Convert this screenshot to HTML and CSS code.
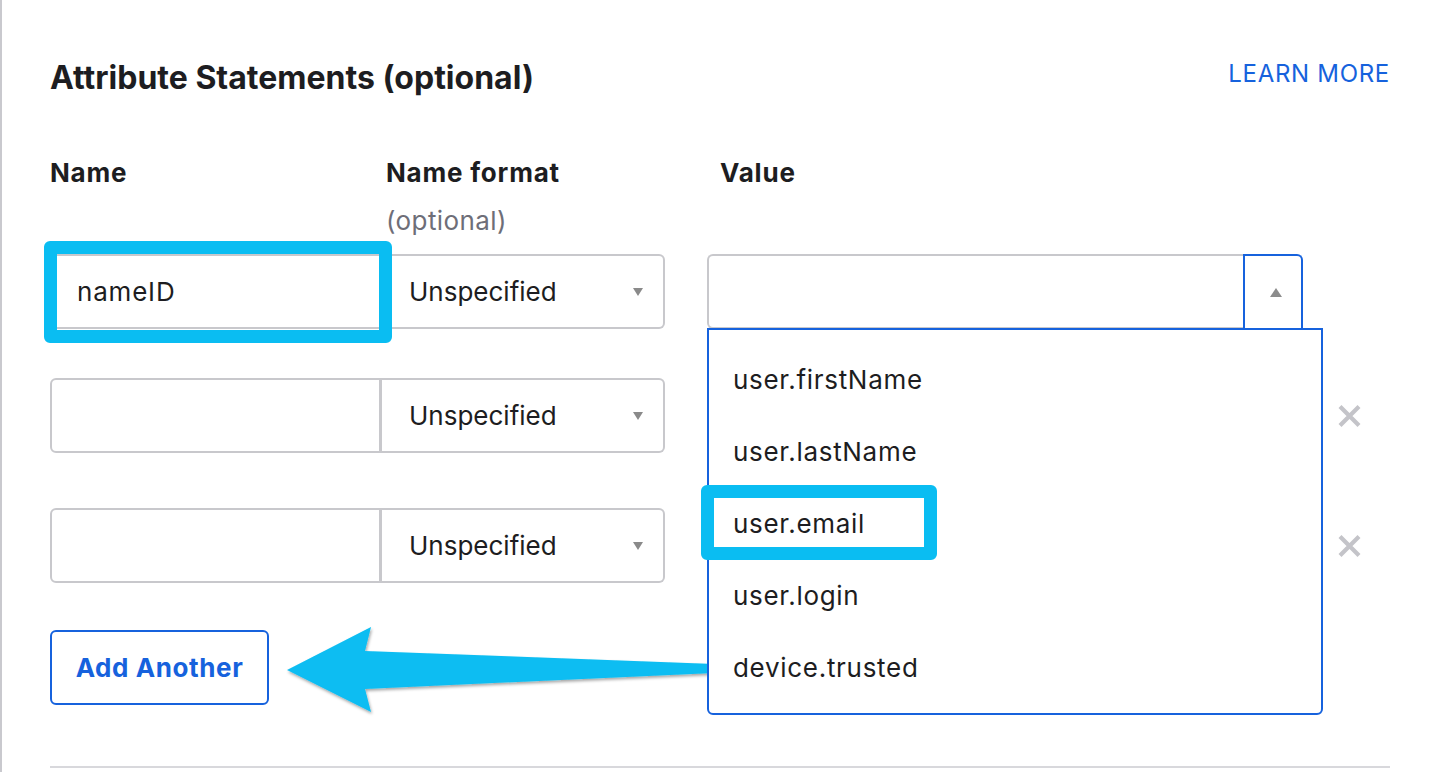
FILE: index.html
```html
<!DOCTYPE html>
<html lang="en">
<head>
<meta charset="utf-8">
<title>Attribute Statements</title>
<link rel="stylesheet" href="styles.css">
</head>
<body>
<div class="page">
  <section class="attrs">
    <div class="attrs-head">
      <h2 class="attrs-title">Attribute Statements (optional)</h2>
      <a class="learn-more" href="#">LEARN MORE</a>
    </div>
    <div class="col-labels">
      <div class="col-label col-name">Name</div>
      <div class="col-label col-format">Name format<span class="col-sub">(optional)</span></div>
      <div class="col-label col-value">Value</div>
    </div>
    <div class="rows">
      <div class="row">
        <div class="name-field">nameID<span class="hl hl-name"></span></div>
        <div class="format-select"><span>Unspecified</span><span class="caret-down"></span></div>
        <div class="value-field">
          <div class="value-input"></div>
          <div class="value-btn open"><span class="caret-up"></span></div>
          <ul class="dropdown">
            <li class="dd-item">user.firstName</li>
            <li class="dd-item">user.lastName</li>
            <li class="dd-item">user.email<span class="hl hl-item"></span></li>
            <li class="dd-item">user.login</li>
            <li class="dd-item">device.trusted</li>
          </ul>
        </div>
      </div>
      <div class="row">
        <div class="name-field"></div>
        <div class="format-select"><span>Unspecified</span><span class="caret-down"></span></div>
        <div class="value-field">
          <div class="value-input"></div>
          <div class="value-btn"><span class="caret-down"></span></div>
        </div>
        <span class="remove"><svg viewBox="0 0 25 24" width="25" height="24"><path d="M3 2.5 L22 21.5 M22 2.5 L3 21.5" stroke="#c4c4c9" stroke-width="4.2" fill="none"/></svg></span>
      </div>
      <div class="row">
        <div class="name-field"></div>
        <div class="format-select"><span>Unspecified</span><span class="caret-down"></span></div>
        <div class="value-field">
          <div class="value-input"></div>
          <div class="value-btn"><span class="caret-down"></span></div>
        </div>
        <span class="remove"><svg viewBox="0 0 25 24" width="25" height="24"><path d="M3 2.5 L22 21.5 M22 2.5 L3 21.5" stroke="#c4c4c9" stroke-width="4.2" fill="none"/></svg></span>
      </div>
    </div>
    <button class="add-btn" type="button">Add Another</button>
  </section>
  <div class="divider"></div>
  <svg class="callout-arrow" viewBox="0 0 440 100" width="440" height="100">
    <defs>
      <filter id="sh" x="-5%" y="-10%" width="110%" height="130%">
        <feDropShadow dx="1" dy="2" stdDeviation="1.5" flood-color="#000" flood-opacity="0.35"/>
      </filter>
    </defs>
    <path d="M5 50 L89 7 L83 31 L432 44 A4.5 4.5 0 0 1 432 53 L83 69 L89 92 Z" fill="#0abdf2" filter="url(#sh)"/>
  </svg>
</div>
</body>
</html>
```

FILE: styles.css
```css
* { box-sizing: border-box; }

body {
  margin: 0;
  background: #fff;
  font-family: Inter, "Liberation Sans", Arial, sans-serif;
  color: #1d1d21;
}

.page {
  position: relative;
  width: 1432px;
  height: 772px;
  overflow: hidden;
  border-left: 2px solid #c9c9ce;
  padding: 60px 42px 0 48px;
}

.attrs-head {
  display: flex;
  justify-content: space-between;
  align-items: flex-start;
}

.attrs-title {
  margin: 0;
  font-size: 32px;
  line-height: 36px;
  font-weight: 700;
}

.learn-more {
  font-size: 24px;
  line-height: 28px;
  color: #1662dd;
  text-decoration: none;
  letter-spacing: 0.7px;
}

.col-labels {
  display: flex;
  margin-top: 62px;
}

.col-label {
  font-size: 26px;
  line-height: 30px;
  font-weight: 700;
  letter-spacing: 0.8px;
}

.col-name { width: 336px; }
.col-format { width: 334px; }

.col-sub {
  display: block;
  margin-top: 18px;
  font-weight: 400;
  letter-spacing: 0.4px;
  color: #6e6e78;
}

.rows {
  display: flex;
  flex-direction: column;
  gap: 49px;
  margin-top: 18px;
}

.row {
  display: flex;
  height: 75px;
  align-items: stretch;
}

.row:nth-child(3) { margin-top: 6px; }

.name-field {
  position: relative;
  width: 332px;
  border: 2px solid #c8c8cc;
  border-right-width: 3px;
  border-radius: 6px 0 0 6px;
  padding-left: 25px;
  display: flex;
  align-items: center;
  font-size: 26px;
  letter-spacing: 0.8px;
}

.format-select {
  width: 283px;
  border: 2px solid #c8c8cc;
  border-left: 0;
  border-radius: 0 6px 6px 0;
  padding: 0 20px 0 27px;
  display: flex;
  align-items: center;
  justify-content: space-between;
  font-size: 26px;
}

.caret-down {
  width: 0;
  height: 0;
  border-left: 5.5px solid transparent;
  border-right: 5.5px solid transparent;
  border-top: 8px solid #8a8a8a;
}

.caret-up {
  width: 0;
  height: 0;
  margin-left: 6px;
  border-left: 6px solid transparent;
  border-right: 6px solid transparent;
  border-bottom: 9px solid #8c8c8c;
}

.value-field {
  position: relative;
  width: 596px;
  margin-left: 42px;
  display: flex;
}

.value-input {
  flex: 1;
  border: 2px solid #c8c8cc;
  border-right: 0;
  border-radius: 6px 0 0 6px;
}

.value-btn {
  width: 60px;
  border: 2px solid #c8c8cc;
  border-radius: 0 6px 6px 0;
  display: flex;
  align-items: center;
  justify-content: center;
}

.value-btn.open {
  border-color: #1662dd;
  border-bottom: 0;
  border-radius: 0 6px 0 0;
}

.dropdown {
  position: absolute;
  z-index: 2;
  left: 0;
  top: 74px;
  width: 616px;
  height: 387px;
  margin: 0;
  padding: 13px 0 10px;
  list-style: none;
  background: #fff;
  border: 2px solid #1662dd;
  border-radius: 0 0 6px 6px;
}

.dd-item {
  position: relative;
  height: 72px;
  padding-left: 24px;
  display: flex;
  align-items: center;
  font-size: 26px;
  letter-spacing: 0.7px;
}

.hl {
  position: absolute;
  border: 13px solid #0abdf2;
  border-radius: 6px;
  pointer-events: none;
}

.hl-name {
  left: -8px;
  top: -15px;
  width: 348px;
  height: 102px;
}

.hl-item {
  left: -8px;
  top: -2px;
  width: 236px;
  height: 75px;
}

.remove {
  margin-left: auto;
  margin-right: 28px;
  align-self: center;
  display: flex;
}

.add-btn {
  display: block;
  margin-top: 47px;
  width: 219px;
  height: 75px;
  padding: 0;
  background: #fff;
  border: 2px solid #1662dd;
  border-radius: 6px;
  font-family: inherit;
  font-size: 26px;
  font-weight: 700;
  letter-spacing: 0.6px;
  color: #1662dd;
  cursor: pointer;
}

.divider {
  margin-top: 61px;
  height: 2px;
  background: #d8d8dc;
}

.callout-arrow {
  position: absolute;
  left: 280px;
  top: 620px;
  overflow: visible;
}
```
